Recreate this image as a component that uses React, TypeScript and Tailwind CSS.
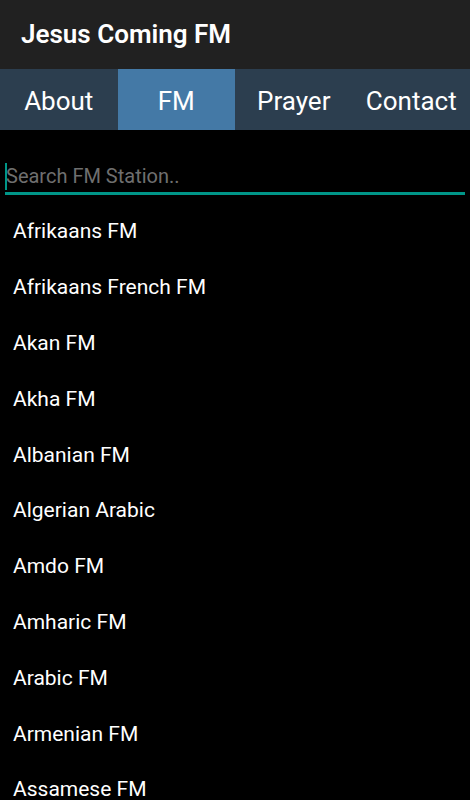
import React from "react";

const stations = [
  "Afrikaans FM",
  "Afrikaans French FM",
  "Akan FM",
  "Akha FM",
  "Albanian FM",
  "Algerian Arabic",
  "Amdo FM",
  "Amharic FM",
  "Arabic FM",
  "Armenian FM",
  "Assamese FM",
];

const tabs = ["About", "FM", "Prayer", "Contact"];

export default function App() {
  return (
    <div
      className="w-[470px] h-[800px] overflow-hidden bg-black text-white"
      style={{ fontFamily: "Roboto, 'Noto Sans', sans-serif" }}
    >
      <header className="h-[69px] bg-[#212121] flex items-center pl-[21px]">
        <h1 className="text-[26px] font-semibold">Jesus Coming FM</h1>
      </header>
      <nav className="h-[61px] bg-[#2c3e4f] grid grid-cols-4">
        {tabs.map((tab) => (
          <div
            key={tab}
            className={
              "flex items-center justify-center pt-[3px] text-[26px] " +
              (tab === "FM" ? "bg-[#4479a6]" : "")
            }
          >
            {tab}
          </div>
        ))}
      </nav>
      <div className="px-[5px] pt-[32px]">
        <div className="relative h-[33px] border-b-[3px] border-[#009688] flex items-center">
          <span className="absolute left-0 top-[1px] w-[2px] h-[27px] bg-[#009688]" />
          <input
            className="w-full bg-transparent outline-none text-[20px] pl-[1px] pb-[2px] placeholder:text-[#6f6f6f]"
            placeholder="Search FM Station.."
          />
        </div>
      </div>
      <ul className="pt-[9px]">
        {stations.map((s) => (
          <li key={s} className="h-[55.8px] flex items-center pl-[13px] text-[21px] leading-none">
            {s}
          </li>
        ))}
      </ul>
    </div>
  );
}
